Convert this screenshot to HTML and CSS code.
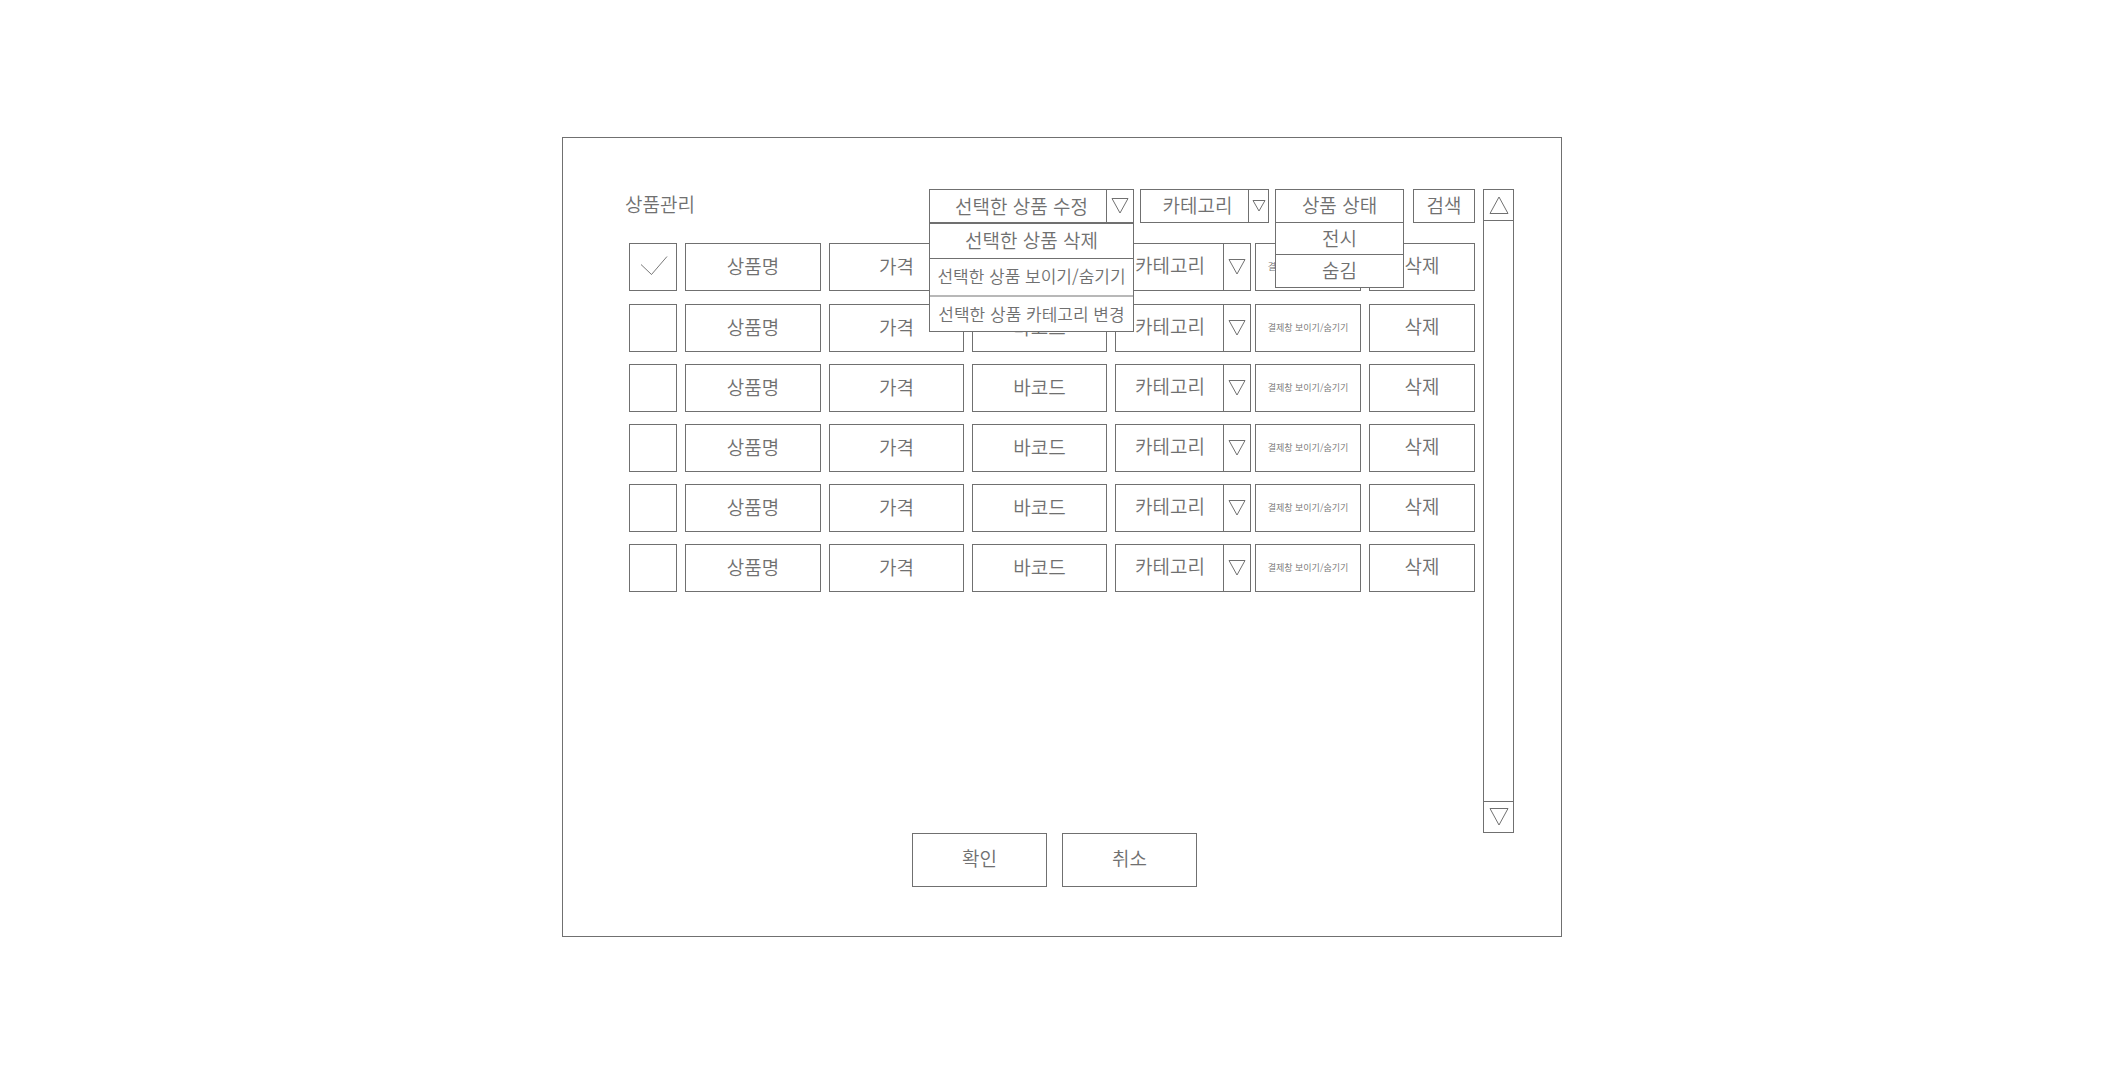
FILE: index.html
```html
<!DOCTYPE html>
<html lang="ko">
<head>
<meta charset="utf-8">
<meta name="viewport" content="width=device-width, initial-scale=1">
<title>상품관리</title>
<link rel="stylesheet" href="styles.css">
</head>
<body>
<svg class="sprite" aria-hidden="true">
  <symbol id="down" viewBox="0 0 18 16"><path d="M1 .5h16L9 15z"/></symbol>
  <symbol id="down-small" viewBox="0 0 14 12"><path d="M1 .5h12L7 11z"/></symbol>
</svg>
<main class="page">
  <form class="panel">
    <div class="body">
      <div class="content">
        <header class="toolbar">
          <h1 class="title">상품관리</h1>
          <div class="filters">
            <div class="picker action">
              <select class="box" aria-label="선택한 상품 수정"><option>선택한 상품 수정</option></select>
              <span class="arrow"><svg class="tri"><use href="#down"/></svg></span>
              <ul class="menu">
                <li><button type="button" class="item">선택한 상품 삭제</button></li>
                <li><button type="button" class="item long">선택한 상품 보이기/숨기기</button></li>
                <li><button type="button" class="item long">선택한 상품 카테고리 변경</button></li>
              </ul>
            </div>
            <div class="picker filter">
              <select class="box" aria-label="카테고리"><option>카테고리</option></select>
              <span class="arrow"><svg class="tri"><use href="#down-small"/></svg></span>
            </div>
            <div class="status">
              <button type="button" class="box" aria-haspopup="true" aria-expanded="true">상품 상태</button>
              <ul class="menu">
                <li><button type="button" class="item">전시</button></li>
                <li><button type="button" class="item">숨김</button></li>
              </ul>
            </div>
            <button type="submit" class="box search">검색</button>
          </div>
        </header>
        <ul class="rows">
          <li class="row picked">
            <input type="checkbox" class="check" aria-label="상품 선택" checked>
            <input type="text" class="box" aria-label="상품명" value="상품명">
            <input type="text" class="box" aria-label="가격" value="가격">
            <input type="text" class="box" aria-label="바코드" value="바코드">
            <div class="pair">
              <div class="picker"><select class="box" aria-label="카테고리"><option>카테고리</option></select><span class="arrow"><svg class="tri"><use href="#down"/></svg></span></div>
              <button type="button" class="box toggle">결제창 보이기/숨기기</button>
            </div>
            <button type="button" class="box">삭제</button>
          </li>
          <li class="row">
            <input type="checkbox" class="check" aria-label="상품 선택">
            <input type="text" class="box" aria-label="상품명" value="상품명">
            <input type="text" class="box" aria-label="가격" value="가격">
            <input type="text" class="box" aria-label="바코드" value="바코드">
            <div class="pair">
              <div class="picker"><select class="box" aria-label="카테고리"><option>카테고리</option></select><span class="arrow"><svg class="tri"><use href="#down"/></svg></span></div>
              <button type="button" class="box toggle">결제창 보이기/숨기기</button>
            </div>
            <button type="button" class="box">삭제</button>
          </li>
          <li class="row">
            <input type="checkbox" class="check" aria-label="상품 선택">
            <input type="text" class="box" aria-label="상품명" value="상품명">
            <input type="text" class="box" aria-label="가격" value="가격">
            <input type="text" class="box" aria-label="바코드" value="바코드">
            <div class="pair">
              <div class="picker"><select class="box" aria-label="카테고리"><option>카테고리</option></select><span class="arrow"><svg class="tri"><use href="#down"/></svg></span></div>
              <button type="button" class="box toggle">결제창 보이기/숨기기</button>
            </div>
            <button type="button" class="box">삭제</button>
          </li>
          <li class="row">
            <input type="checkbox" class="check" aria-label="상품 선택">
            <input type="text" class="box" aria-label="상품명" value="상품명">
            <input type="text" class="box" aria-label="가격" value="가격">
            <input type="text" class="box" aria-label="바코드" value="바코드">
            <div class="pair">
              <div class="picker"><select class="box" aria-label="카테고리"><option>카테고리</option></select><span class="arrow"><svg class="tri"><use href="#down"/></svg></span></div>
              <button type="button" class="box toggle">결제창 보이기/숨기기</button>
            </div>
            <button type="button" class="box">삭제</button>
          </li>
          <li class="row">
            <input type="checkbox" class="check" aria-label="상품 선택">
            <input type="text" class="box" aria-label="상품명" value="상품명">
            <input type="text" class="box" aria-label="가격" value="가격">
            <input type="text" class="box" aria-label="바코드" value="바코드">
            <div class="pair">
              <div class="picker"><select class="box" aria-label="카테고리"><option>카테고리</option></select><span class="arrow"><svg class="tri"><use href="#down"/></svg></span></div>
              <button type="button" class="box toggle">결제창 보이기/숨기기</button>
            </div>
            <button type="button" class="box">삭제</button>
          </li>
          <li class="row">
            <input type="checkbox" class="check" aria-label="상품 선택">
            <input type="text" class="box" aria-label="상품명" value="상품명">
            <input type="text" class="box" aria-label="가격" value="가격">
            <input type="text" class="box" aria-label="바코드" value="바코드">
            <div class="pair">
              <div class="picker"><select class="box" aria-label="카테고리"><option>카테고리</option></select><span class="arrow"><svg class="tri"><use href="#down"/></svg></span></div>
              <button type="button" class="box toggle">결제창 보이기/숨기기</button>
            </div>
            <button type="button" class="box">삭제</button>
          </li>
        </ul>
      </div>
      <div class="scrollbar">
        <button type="button" class="step" aria-label="위로"><svg width="20" height="18" viewBox="0 0 20 18"><path d="M1 17.5h18L10 1z"/></svg></button>
        <button type="button" class="step" aria-label="아래로"><svg width="20" height="18" viewBox="0 0 20 18"><path d="M1 .5h18L10 17z"/></svg></button>
      </div>
    </div>
    <footer class="footer">
      <button type="submit" class="box">확인</button>
      <button type="button" class="box">취소</button>
    </footer>
  </form>
</main>
</body>
</html>
```
FILE: styles.css
```css
:root {
  --line: #707070;
}

* {
  box-sizing: border-box;
}

body {
  margin: 0;
  background: #fff;
  color: var(--line);
  font: 350 19px/30px "Noto Sans CJK KR", sans-serif;
}

ul {
  list-style: none;
  margin: 0;
  padding: 0;
}

svg {
  display: block;
  fill: none;
  stroke: var(--line);
}

.sprite {
  position: absolute;
  width: 0;
  height: 0;
}

.page {
  padding: 137px 60px 60px 62px;
}

.panel {
  max-width: 1000px;
  margin: 0 auto;
  padding: 51px 47px 49px 62px;
  border: 1px solid var(--line);
}

.body {
  display: flex;
  gap: 8px;
  min-height: 644px;
}

.content {
  flex: 1;
  min-width: 0;
}

/* Outlined fields and buttons */
.box {
  display: block;
  width: 100%;
  min-width: 0;
  height: 48px;
  margin: 0;
  padding: 0 0 4px;
  border: 1px solid var(--line);
  border-radius: 0;
  background: #fff;
  color: inherit;
  font: inherit;
  text-align: center;
  appearance: none;
}

.picker {
  position: relative;
}

.picker .box {
  padding-right: 26px;
  text-align-last: center;
}

.arrow {
  position: absolute;
  top: 0;
  right: 0;
  bottom: 0;
  display: flex;
  align-items: center;
  justify-content: center;
  width: 28px;
  border: solid var(--line);
  border-width: 0 1px;
  pointer-events: none;
}

.tri {
  width: 18px;
  height: 16px;
}

/* Toolbar */
.toolbar {
  display: flex;
  align-items: flex-start;
  justify-content: space-between;
}

.title {
  margin: 0;
  font-size: 19px;
  font-weight: inherit;
}

.filters {
  display: flex;
  gap: 6px;
}

.filters .box {
  height: 34px;
  padding-bottom: 4px;
}

.action {
  width: 205px;
}

.filters .action .box {
  padding: 0 22px 0 2px;
}

.filters .status .box {
  padding-bottom: 2px;
}

.filter {
  width: 129px;
}

.filter .box {
  padding-right: 14px;
}

.filter .arrow {
  width: 21px;
}

.filter .tri {
  width: 14px;
  height: 12px;
}

.status {
  position: relative;
  width: 129px;
}

.filters .search {
  width: 62px;
  margin-left: 3px;
}

.menu {
  position: absolute;
  z-index: 2;
  top: 100%;
  left: 0;
  width: 100%;
  border: 1px solid var(--line);
  background: #fff;
}

.item {
  display: block;
  width: 100%;
  height: 34px;
  padding: 0 0 2px;
  border: 0;
  background: none;
  color: inherit;
  font: inherit;
  white-space: nowrap;
}

.long {
  height: 36px;
  font-size: 17px;
}

.menu li + li {
  border-top: 1px solid var(--line);
}

.action li + li + li {
  border-top: 2px solid #b8b8b8;
}

.action li:last-child .item {
  height: 34px;
  padding-bottom: 0;
}

.status .menu {
  border-top: 0;
}

.status .item {
  height: 31px;
  padding-bottom: 4px;
}

.status li:last-child .item {
  height: 32px;
}

/* Product rows */
.rows {
  display: grid;
  gap: 12px;
  padding: 20px 0 0 4px;
}

.row {
  display: grid;
  grid-template-columns: 48px minmax(0, 136fr) minmax(0, 135fr) minmax(0, 135fr) minmax(0, 246fr) minmax(0, 106fr);
  gap: 8px;
}

.picked {
  padding-bottom: 1px;
}

.pair {
  display: grid;
  grid-template-columns: minmax(0, 136fr) minmax(0, 106fr);
  gap: 4px;
}

.check {
  width: 48px;
  height: 48px;
  margin: 0;
  border: 1px solid var(--line);
  background: #fff;
  appearance: none;
}

.check:checked {
  background: #fff url("data:image/svg+xml,%3Csvg xmlns='http://www.w3.org/2000/svg' width='46' height='46' fill='none' stroke='%23555'%3E%3Cpath stroke-width='.8' d='M11 20.500L21.500 30.500L37 12.500'/%3E%3C/svg%3E") no-repeat;
}

.toggle {
  padding-bottom: 0;
  font-size: 9px;
  white-space: nowrap;
}

/* Scrollbar */
.scrollbar {
  display: flex;
  flex-direction: column;
  justify-content: space-between;
  width: 31px;
  border: 1px solid var(--line);
}

.step {
  display: grid;
  place-items: center;
  height: 31px;
  padding: 0;
  border: solid var(--line);
  border-width: 0 0 1px;
  background: none;
}

.step:last-child {
  border-width: 1px 0 0;
}

.footer {
  display: flex;
  justify-content: center;
  gap: 15px;
  padding-right: 30px;
}

.footer .box {
  width: 135px;
  height: 54px;
}
```
